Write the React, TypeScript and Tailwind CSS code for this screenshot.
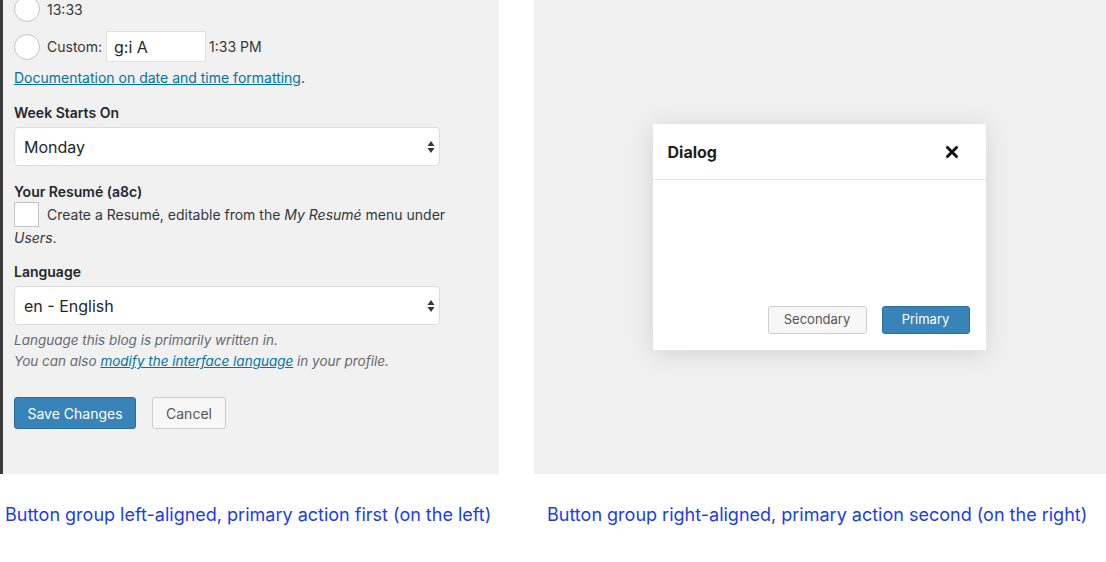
import React from 'react';

const font = { fontFamily: 'Inter, "Liberation Sans", sans-serif' };

const Arrows: React.FC = () => (
  <svg width="8" height="14" viewBox="0 0 8 14" className="shrink-0">
    <path d="M4 1 L7.5 6 L0.5 6 Z" fill="#32373c" />
    <path d="M4 13 L7.5 8 L0.5 8 Z" fill="#32373c" />
  </svg>
);

const Select: React.FC<{ value: string }> = ({ value }) => (
  <div className="flex items-center justify-between w-[426px] h-[39px] bg-white border border-[#dcdcde] rounded-[4px] pl-[9px] pr-[4px] text-[16px] text-[#23282d]">
    <span>{value}</span>
    <Arrows />
  </div>
);

const Radio: React.FC = () => (
  <div className="w-[26px] h-[26px] rounded-full bg-white border border-[#c3c4c7] shrink-0" />
);

const App: React.FC = () => {
  return (
    <div className="w-[1106px] h-[562px] bg-white overflow-hidden" style={font}>
      <div className="flex gap-[35px] h-[474px]">
        {/* Left: settings form */}
        <div className="w-[499px] h-full bg-[#f1f1f1] border-l-[3px] border-[#3c3c3c] pl-[11px] overflow-hidden text-[14px] text-[#32373c]">
          <div className="flex items-center gap-[7px] mt-[-4px] h-[26px]">
            <Radio />
            <span>13:33</span>
          </div>
          <div className="flex items-center mt-[9px] h-[31px]">
            <Radio />
            <span className="ml-[7px]">Custom:</span>
            <div className="ml-[4px] w-[100px] h-[31px] bg-white border border-[#e0e0e0] rounded-[2px] flex items-center pl-[7px] text-[16px] text-[#23282d]">
              g:i A
            </div>
            <span className="ml-[3px]">1:33 PM</span>
          </div>
          <div className="mt-[5px] leading-[22px]">
            <span className="text-[#0073aa] underline">Documentation on date and time formatting</span>.
          </div>

          <div className="mt-[13px] font-semibold text-[#23282d] leading-[22px]">Week Starts On</div>
          <div className="mt-[3px]">
            <Select value="Monday" />
          </div>

          <div className="mt-[15px] font-semibold text-[#23282d] leading-[22px]">Your Resumé (a8c)</div>
          <div className="w-[440px] leading-[22px] mt-[1px]">
            <span className="inline-block align-middle w-[25px] h-[25px] bg-white border border-[#c3c4c7] mr-[8px] mt-[-3px]" />
            Create a Resumé, editable from the <em>My Resumé</em> menu under <em>Users</em>.
          </div>

          <div className="mt-[12px] font-semibold text-[#23282d] leading-[22px]">Language</div>
          <div className="mt-[3px]">
            <Select value="en - English" />
          </div>
          <div className="mt-[5px] italic text-[13.5px] text-[#646970] leading-[21px]">
            <div>Language this blog is primarily written in.</div>
            <div>
              You can also <span className="text-[#0073aa] underline">modify the interface language</span> in your profile.
            </div>
          </div>

          <div className="flex gap-[16px] mt-[25px]">
            <button className="h-[32px] w-[122px] rounded-[3px] bg-[#3884b8] border border-[#2a6d9c] text-white text-[14px]">
              Save Changes
            </button>
            <button className="h-[32px] w-[74px] rounded-[3px] bg-[#f7f7f7] border border-[#cccccc] text-[#555] text-[14px]">
              Cancel
            </button>
          </div>
        </div>

        {/* Right: dialog */}
        <div className="flex-1 h-full bg-[#f0f0f0] flex items-center justify-center">
          <div className="w-[333px] h-[226px] bg-white shadow-[0_3px_24px_rgba(0,0,0,0.12)] flex flex-col -translate-x-[1px]">
            <div className="h-[56px] border-b border-[#e2e4e7] flex items-center justify-between pl-[15px] pr-[28px]">
              <span className="text-[16px] font-bold text-[#1e1e1e]">Dialog</span>
              <svg width="12" height="12" viewBox="0 0 12 12">
                <path d="M1.5 1.5 L10.5 10.5 M10.5 1.5 L1.5 10.5" stroke="#111" strokeWidth="3" strokeLinecap="round" />
              </svg>
            </div>
            <div className="flex-1 flex items-end justify-end gap-[15px] pr-[16px] pb-[16px]">
              <button className="h-[28px] w-[99px] rounded-[3px] bg-[#f7f7f7] border border-[#cccccc] text-[#555] text-[13px]">
                Secondary
              </button>
              <button className="h-[28px] w-[88px] rounded-[3px] bg-[#3884b8] border border-[#2a6d9c] text-white text-[13px]">
                Primary
              </button>
            </div>
          </div>
        </div>
      </div>

      {/* Captions */}
      <div className="flex mt-[30px] text-[18px] text-[#1a3cf0] leading-[22px]">
        <div className="w-[534px] pl-[5px]">Button group left-aligned, primary action first (on the left)</div>
        <div className="pl-[13px]">Button group right-aligned, primary action second (on the right)</div>
      </div>
    </div>
  );
};

export default App;
